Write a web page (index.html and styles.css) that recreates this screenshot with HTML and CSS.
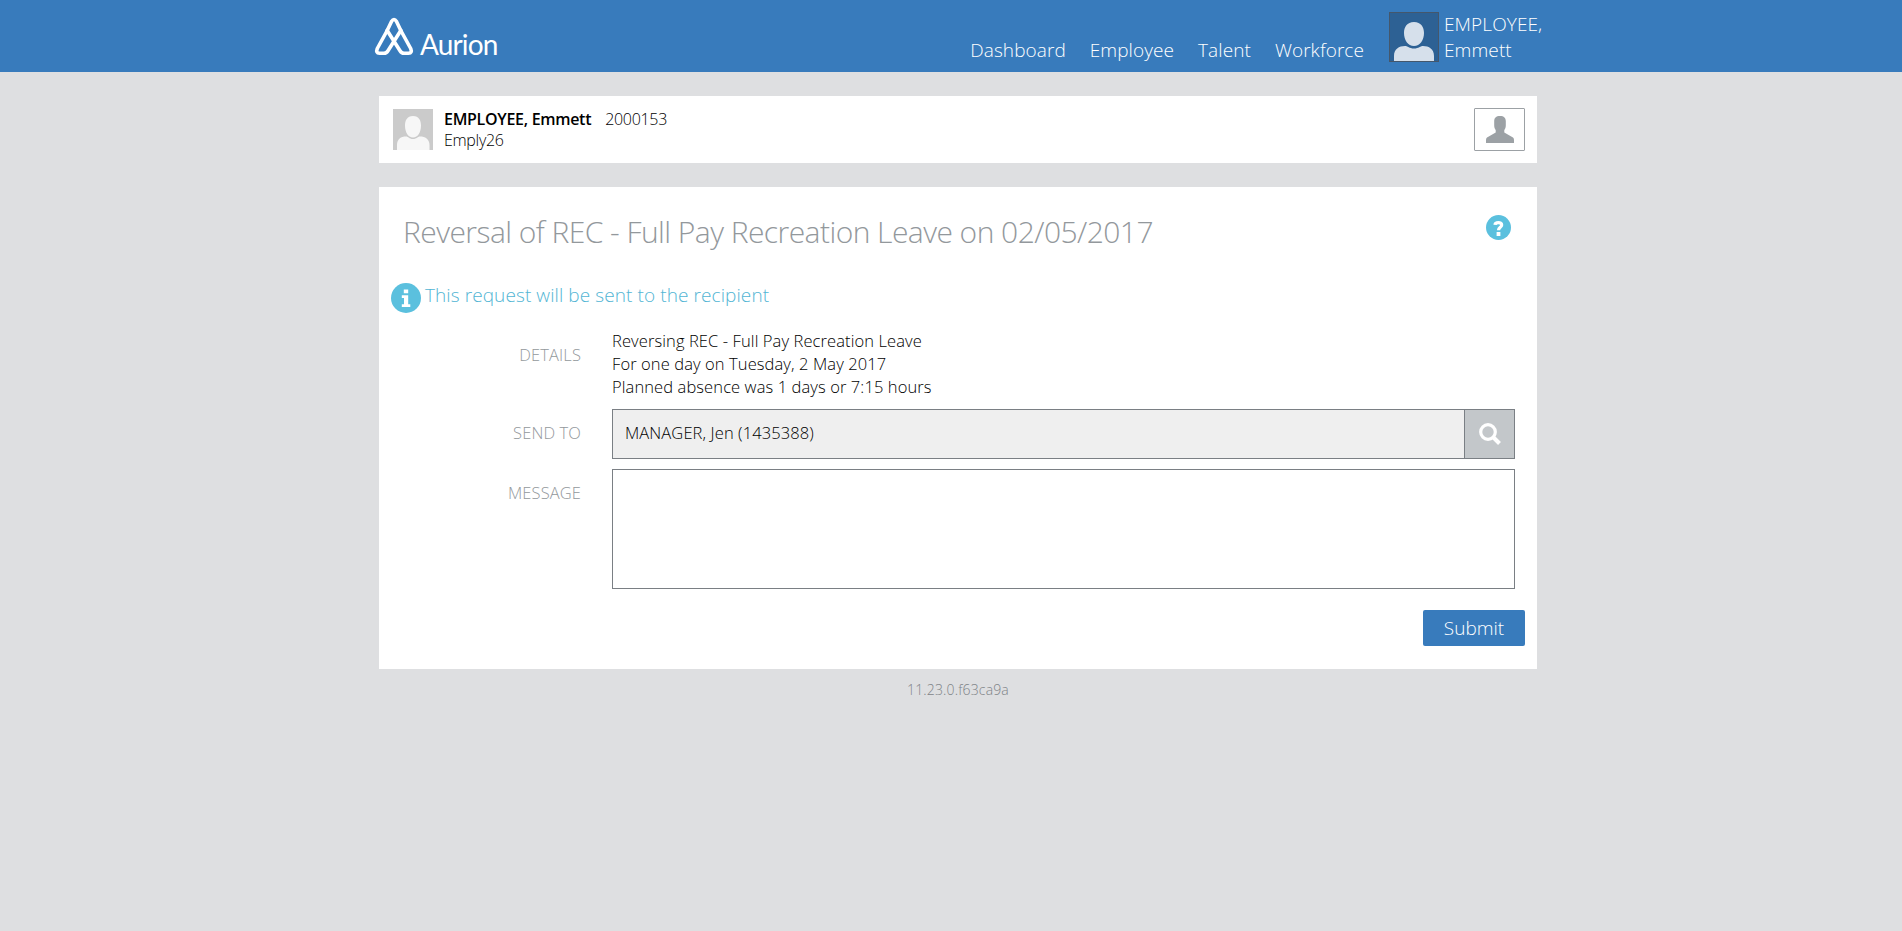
FILE: index.html
```html
<!DOCTYPE html>
<html lang="en">
<head>
<meta charset="utf-8">
<title>Aurion</title>
<link rel="stylesheet" href="styles.css">
</head>
<body>
<header class="topbar">
  <div class="topbar-inner">
    <div class="brand">
      <svg class="brand-mark" width="40" height="40" viewBox="0 0 40 40" fill="none" stroke="#fff" stroke-width="3.600" stroke-linejoin="round" stroke-linecap="round">
        <path d="M13.200 14.500 17.500 5.500Q20 1.500 22.500 5.500L26.800 14.500"/>
        <path d="M13.200 14.500 3.300 32.500Q1.500 37.200 5.500 37.200H10Q12.500 37.200 14 34.700L26.800 14.500"/>
        <path d="M26.800 14.500 36.700 32.500Q38.500 37.200 34.500 37.200H30Q27.500 37.200 26 34.700L13.200 14.500"/>
      </svg>
      <span class="brand-name">Aurion</span>
    </div>
    <nav class="menu"><a>Dashboard</a><a>Employee</a><a>Talent</a><a>Workforce</a></nav>
    <div class="user">
      <svg class="user-photo" width="50" height="50" viewBox="0 0 50 50">
        <rect x=".5" y=".5" width="49" height="49" fill="#2d6194" stroke="#44576c"/>
        <path d="M25 10c7 0 10 5 10 11 0 7-4 13-10 13s-10-6-10-13c0-6 3-11 10-11zM5 49V44c0-7 5-10 11-10 3 0 4 2.500 9 2.500S31 34 34 34c6 0 11 3 11 10v5z" fill="#d6e0eb"/>
      </svg>
      <span class="user-name">EMPLOYEE,<br>Emmett</span>
    </div>
  </div>
</header>
<main class="page">
  <section class="card person">
    <svg class="person-photo" width="40" height="41" viewBox="0 0 40 41">
      <rect width="40" height="41" fill="#cbcbcb"/>
      <path d="M20 7c6 0 8 4.500 8 9.500 0 6.500-3 12-8 12s-8-5.500-8-12C12 11.500 14 7 20 7zM4 41v-5c0-6 4-8.500 9-8.500 2.500 0 3 2.500 7 2.500s4.500-2.500 7-2.500c5 0 9.500 2.500 9.500 8.500v5z" fill="#f7f7f7"/>
    </svg>
    <div class="person-text">
      <div><strong>EMPLOYEE, Emmett</strong><span class="person-id">2000153</span></div>
      <div>Emply26</div>
    </div>
    <button class="profile-button" type="button">
      <svg width="28" height="27" viewBox="0 0 28 27"><path d="M14 0c4 0 5.800 2 5.800 5v4.500c0 2-.8 3.500-1.500 4.500v2.500L27 21.500q1 .8 1 2.500v3H0v-3q0-1.700 1-2.500l8.700-5V14c-.7-1-1.500-2.500-1.500-4.500V5C8.200 2 10 0 14 0z" fill="#9ca1a5"/></svg>
    </button>
  </section>
  <section class="card request">
    <div class="title-row">
      <h1>Reversal of REC - Full Pay Recreation Leave on 02/05/2017</h1>
      <svg class="help" width="25" height="25" viewBox="0 0 25 25"><circle cx="12.500" cy="12.500" r="12.500" fill="#5bc0de"/><path d="M9 9.800C9.200 6.900 15.700 6.700 15.700 10c0 2.300-3.200 2.300-3.200 5.200" fill="none" stroke="#fff" stroke-width="3.200"/><rect x="10.600" y="17" width="3.800" height="4" fill="#fff"/></svg>
    </div>
    <div class="notice">
      <svg class="notice-icon" width="30" height="30" viewBox="0 0 30 30"><circle cx="15" cy="15" r="15" fill="#5bc0de"/><path d="M12.800 6.500h4.400v3.800h-4.400zM10.800 12.300h6.400v8.900h2.100V24h-8.500v-2.800h2.200v-6.100h-2.200z" fill="#fff"/></svg>
      <span>This request will be sent to the recipient</span>
    </div>
    <form class="fields">
      <span class="label details-label">DETAILS</span>
      <div class="details">Reversing REC - Full Pay Recreation Leave<br>For one day on Tuesday, 2 May 2017<br>Planned absence was 1 days or 7:15 hours</div>
      <span class="label send-label">SEND TO</span>
      <div class="lookup">
        <div class="lookup-value">MANAGER, Jen (1435388)</div>
        <button class="lookup-button" type="button"><svg width="22" height="22" viewBox="0 0 22 22" fill="none" stroke="#fff"><circle cx="9" cy="9" r="7.300" stroke-width="3.200"/><path d="M14 14l6.500 6.500" stroke-width="4"/></svg></button>
      </div>
      <span class="label message-label">MESSAGE</span>
      <textarea class="message"></textarea>
    </form>
    <div class="actions"><button class="submit" type="button">Submit</button></div>
  </section>
  <footer class="version">11.23.0.f63ca9a</footer>
</main>
</body>
</html>
```

FILE: styles.css
```css
* { box-sizing: border-box; }
body { margin: 0; min-height: 931px; background: #dedfe1; color: #000; font: 300 16.5px/23px "Open Sans", sans-serif; }
svg { display: block; flex: none; }
button { padding: 0; font: inherit; }
.topbar { height: 72px; background: #387bbc; color: #fff; }
.topbar-inner { display: flex; width: 1170px; height: 72px; margin-left: 374px; }
.brand { display: flex; padding-top: 16px; }
.brand-name { margin: 10px 0 0 6px; font: 400 28px/36px Lato, sans-serif; letter-spacing: -.85px; }
.menu { display: flex; gap: 24px; margin-left: auto; padding-top: 37px; font-size: 19px; line-height: 27px; letter-spacing: .08px; }
.user { display: flex; gap: 5px; margin-left: 25px; padding-top: 12px; }
.user-name { width: 100px; font-size: 19px; line-height: 26px; margin-top: -1px; letter-spacing: .1px; }
.page { width: 1158px; margin-left: 379px; padding-top: 24px; }
.card { background: #fff; }
.person { display: flex; height: 67px; padding: 13px 12px 0 14px; }
.person-text { margin: 0 0 0 11px; font-size: 16px; line-height: 21px; letter-spacing: -.3px; }
.person-text strong { font-weight: 600; }
.person-id { margin-left: 14px; }
.profile-button { display: flex; align-items: center; justify-content: center; width: 51px; height: 43px; margin: -1px 0 0 auto; border: 1px solid #9ca1a5; border-radius: 1px; background: #fff; }
.request { height: 482px; margin-top: 24px; padding: 24px 12px 0; }
.title-row { display: flex; justify-content: space-between; padding: 0 14px 0 12px; }
h1 { margin: 0; color: #93989c; font-size: 30px; line-height: 42px; font-weight: 300; letter-spacing: -.55px; }
.help { margin-top: 4px; }
.notice { display: flex; gap: 4px; height: 31px; margin-top: 29px; color: #52b5d4; font-size: 19px; line-height: 27px; letter-spacing: .09px; }
.notice-icon { margin-top: 1px; }
.fields { display: grid; grid-template-columns: 190px 903px; column-gap: 31px; margin-top: 16px; }
.label { color: #93989c; text-align: right; letter-spacing: .1px; }
.details { height: 80px; letter-spacing: .1px; }
.details-label { padding-top: 14px; }
.send-label { padding-top: 12px; }
.lookup { display: flex; height: 50px; border: 1px solid #7a7f84; }
.lookup-value { flex: 1; padding: 11px 12px; background: #efefef; letter-spacing: .1px; }
.lookup-button { display: flex; align-items: center; justify-content: center; width: 50px; border: 0; border-left: 1px solid #7a7f84; background: #c3c7ca; }
.message-label { padding-top: 22px; }
.message { width: 903px; height: 120px; margin: 10px 0 0; border: 1px solid #7a7f84; border-radius: 0; resize: none; background: #fff; }
.actions { display: flex; justify-content: flex-end; margin-top: 21px; }
.submit { width: 102px; height: 36px; padding-top: 1px; border: 0; border-radius: 2px; background: #387bbc; color: #fff; font-size: 19px; }
.version { margin-top: 10px; color: #7f8488; text-align: center; font-size: 14px; line-height: 22px; letter-spacing: .15px; }
```
